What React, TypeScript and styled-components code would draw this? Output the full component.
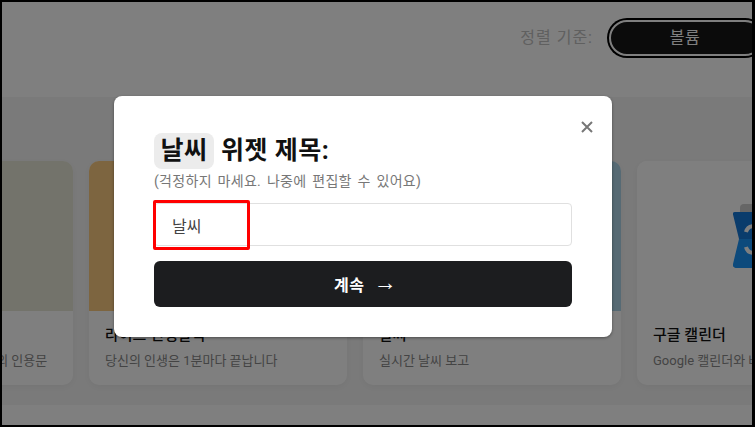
import React from "react";
import styled, { createGlobalStyle } from "styled-components";

const GlobalStyle = createGlobalStyle`
  html, body {
    margin: 0;
    padding: 0;
    background: #fff;
  }
  * {
    box-sizing: border-box;
  }
`;

const Frame = styled.div`
  position: relative;
  width: 755px;
  height: 427px;
  border-style: solid;
  border-color: #000;
  border-width: 2px 3px 2px 2px;
  overflow: hidden;
  display: flex;
  flex-direction: column;
  background: #fff;
  font-family: Roboto, "Noto Sans CJK KR", sans-serif;
`;

const Header = styled.header`
  height: 95px;
  flex-shrink: 0;
  display: flex;
  justify-content: flex-end;
  align-items: flex-start;
  gap: 16px;
  padding-top: 17px;
  margin-right: -11px;
`;

const SortLabel = styled.span`
  font-size: 16px;
  line-height: 38px;
  letter-spacing: 1px;
  color: #c0c0c0;
`;

const SortSelect = styled.div`
  width: 154px;
  height: 36px;
  margin: 1px 0;
  border: 2px solid #fff;
  border-radius: 18px;
  box-shadow: 0 0 0 2px #000;
  background: #161616;
  color: #fff;
  font-size: 16px;
  line-height: 32px;
  letter-spacing: 0.5px;
  text-align: center;
  padding-right: 2px;
`;

const Section = styled.section`
  height: 308px;
  flex-shrink: 0;
  padding-top: 64px;
  background: #f5f5f5;
`;

const CardRow = styled.div`
  display: flex;
  gap: 16px;
  margin-left: -187px;
`;

const Card = styled.article`
  width: 258px;
  height: 224px;
  flex-shrink: 0;
  border-radius: 10px;
  overflow: hidden;
  background: #fff;
  box-shadow: 0 2px 8px rgba(0, 0, 0, 0.05);
`;

const CardImage = styled.div<{ $color: string }>`
  height: 150px;
  display: flex;
  align-items: center;
  justify-content: center;
  background: ${({ $color }) => $color};
`;

const CardBody = styled.div`
  padding: 14px 16px 0;
`;

const CardTitle = styled.h3`
  margin: 0 0 7px;
  font-size: 15px;
  font-weight: 500;
  line-height: 20px;
  color: #111;
`;

const CardText = styled.p`
  margin: 0;
  font-size: 13px;
  line-height: 18px;
  color: #888;
  white-space: nowrap;
`;

const Overlay = styled.div`
  position: absolute;
  inset: 0;
  padding: 94px 0 0 112px;
  background: rgba(0, 0, 0, 0.5);
`;

const Modal = styled.div`
  position: relative;
  width: 498px;
  height: 241px;
  padding: 36px 40px 0;
  border-radius: 8px;
  background: #fff;
  box-shadow: 0 1px 3px rgba(0, 0, 0, 0.4);
`;

const CloseButton = styled.button`
  position: absolute;
  top: 24px;
  right: 18px;
  width: 14px;
  height: 14px;
  padding: 0;
  border: none;
  background: transparent;
  display: flex;
  color: #777;
`;

const Title = styled.h2`
  margin: 0;
  display: flex;
  align-items: center;
  gap: 7px;
  font-size: 25px;
  font-weight: 700;
  line-height: 38px;
  letter-spacing: 0.5px;
  color: #111;
`;

const TitleChip = styled.span`
  height: 36px;
  line-height: 36px;
  padding: 0 6.5px;
  border-radius: 8px;
  background: #ececec;
`;

const Subtitle = styled.p`
  margin: 2px 0 0;
  font-size: 14px;
  line-height: 18px;
  letter-spacing: 0.3px;
  word-spacing: 2px;
  color: #777;
`;

const InputWrap = styled.div`
  position: relative;
  margin-top: 13px;
`;

const NameInput = styled.input`
  display: block;
  width: 100%;
  height: 43px;
  padding: 0 17px;
  border: 1px solid #e0e0e0;
  border-radius: 4px;
  outline: none;
  font-family: inherit;
  font-size: 16px;
  color: #444;
`;

const Highlight = styled.div`
  position: absolute;
  left: -1px;
  top: -3px;
  width: 97px;
  height: 50px;
  border: 3px solid #f00;
  border-radius: 2px;
  pointer-events: none;
`;

const SubmitButton = styled.button`
  display: flex;
  align-items: center;
  justify-content: center;
  gap: 9px;
  width: 100%;
  height: 46px;
  margin-top: 15px;
  padding: 0 0 1px 5px;
  border: none;
  border-radius: 6px;
  background: #1c1d1f;
  color: #fff;
  font-family: inherit;
  font-size: 16px;
  font-weight: 700;
  letter-spacing: 0.5px;
`;

const Arrow = styled.span`
  margin-top: -2px;
  font-family: "Liberation Sans", sans-serif;
  font-size: 23px;
  font-weight: 400;
`;

const Footer = styled.footer`
  flex: 1;
  background: #fff;
`;

const CalendarIcon = () => (
  <svg width="66" height="64" viewBox="0 0 66 64" fill="none">
    <rect x="7" y="0" width="52" height="12" rx="4" fill="#ccc" />
    <path d="M2 8h62a2 2 0 0 1 2 2.4L60 35H6L0 10.4A2 2 0 0 1 2 8Z" fill="#1478d8" />
    <path d="M6 35h54l6 25a3 3 0 0 1-3 4H3a3 3 0 0 1-3-4Z" fill="#1a94f8" />
    <path
      d="M13 28c1-4 4-6 8-6 5 0 8 3 8 7s-3 6-7 6c5 0 8 3 8 7s-4 7-9 7c-4 0-7-2-8-6"
      stroke="#fff"
      strokeWidth="4"
    />
  </svg>
);

const widgets = [
  { title: "오늘의 명언", text: "새로운 영감을 전해드리는 오늘의 인용문", color: "#e6e6d6" },
  { title: "라이프 인생달력", text: "당신의 인생은 1분마다 끝납니다", color: "#fbcb80" },
  { title: "날씨", text: "실시간 날씨 보고", color: "#acd4e8" },
  { title: "구글 캘린더", text: "Google 캘린더와 바로 연동", color: "#fff", icon: true },
];

export default function App() {
  return (
    <Frame>
      <GlobalStyle />
      <Header>
        <SortLabel>정렬 기준:</SortLabel>
        <SortSelect>볼륨</SortSelect>
      </Header>
      <Section>
        <CardRow>
          {widgets.map((w) => (
            <Card key={w.title}>
              <CardImage $color={w.color}>{w.icon && <CalendarIcon />}</CardImage>
              <CardBody>
                <CardTitle>{w.title}</CardTitle>
                <CardText>{w.text}</CardText>
              </CardBody>
            </Card>
          ))}
        </CardRow>
      </Section>
      <Footer />
      <Overlay>
        <Modal>
          <CloseButton aria-label="닫기">
            <svg width="14" height="14" viewBox="0 0 14 14" fill="none">
              <path d="M2 2l10 10M12 2L2 12" stroke="currentColor" strokeWidth="2" />
            </svg>
          </CloseButton>
          <Title>
            <TitleChip>날씨</TitleChip> 위젯 제목:
          </Title>
          <Subtitle>(걱정하지 마세요. 나중에 편집할 수 있어요)</Subtitle>
          <InputWrap>
            <NameInput defaultValue="날씨" />
            <Highlight />
          </InputWrap>
          <SubmitButton>
            계속 <Arrow>→</Arrow>
          </SubmitButton>
        </Modal>
      </Overlay>
    </Frame>
  );
}
